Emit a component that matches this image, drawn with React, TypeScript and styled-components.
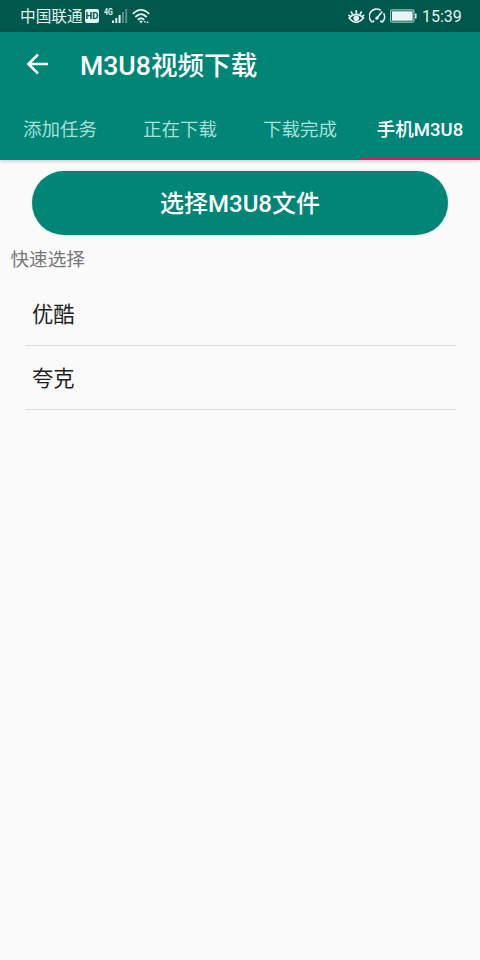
import React from "react";
import styled, { createGlobalStyle } from "styled-components";

const GlobalStyle = createGlobalStyle`
  *, *::before, *::after { box-sizing: border-box; }
  body {
    margin: 0;
    background: #fafafa;
    font-family: Roboto, "Noto Sans CJK SC", sans-serif;
  }
  svg { display: block; flex: none; }
`;

const Screen = styled.div`
  width: 480px;
  height: 960px;
  background: #fafafa;
  overflow: hidden;
`;

const StatusBar = styled.div`
  display: flex;
  justify-content: space-between;
  align-items: center;
  height: 32px;
  padding: 0 18px 0 20px;
  background: #00574b;
  color: #e3f3f0;
`;

const StatusGroup = styled.div`
  display: flex;
  align-items: center;
  height: 32px;
`;

const Carrier = styled.span`
  padding-top: 2px;
  font-size: 15.7px;
  line-height: 32px;
  width: 65px;
  white-space: nowrap;
`;

const HdBadge = styled.span`
  width: 14px;
  height: 14px;
  border-radius: 2px;
  background: #e3f3f0;
  color: #00574b;
  font-size: 9.5px;
  font-weight: 700;
  line-height: 14px;
  text-align: center;
`;

const Network = styled.span`
  align-self: flex-start;
  margin: 6px 0 0 5px;
  width: 8px;
  font-size: 9.5px;
  font-weight: 700;
  line-height: 12px;
  transform: scaleX(0.74);
  transform-origin: left center;
`;

const Clock = styled.span`
  padding-top: 2px;
  margin-left: 5px;
  width: 40px;
  font-size: 16px;
  line-height: 32px;
`;

const Header = styled.header`
  height: 128px;
  background: #008577;
  box-shadow: 0 1px 4px rgba(0, 0, 0, 0.22);
`;

const Toolbar = styled.div`
  display: flex;
  align-items: center;
  height: 64px;
  padding-left: 26px;
  color: #fff;
`;

const Title = styled.h1`
  margin: 0 0 0 32px;
  padding-top: 4px;
  font-size: 26.6px;
  font-weight: 500;
  line-height: 60px;
`;

const Tabs = styled.nav`
  display: grid;
  grid-template-columns: repeat(4, 120px);
  height: 64px;
`;

const Tab = styled.div<{ $active?: boolean }>`
  padding-top: 7px;
  text-align: center;
  white-space: nowrap;
  font-size: 18.5px;
  font-weight: ${(p) => (p.$active ? 500 : 400)};
  line-height: 54px;
  color: ${(p) => (p.$active ? "#fff" : "#a6e0d9")};
  border-bottom: 3px solid ${(p) => (p.$active ? "#d81b60" : "transparent")};
`;

const PickButton = styled.button`
  display: block;
  width: 416px;
  height: 64px;
  margin: 11px 32px 0;
  padding: 2px 0 0;
  border: 0;
  border-radius: 32px;
  background: #008577;
  box-shadow: 0 0 2px rgba(0, 133, 119, 0.25);
  color: #fff;
  font: 500 24px/62px Roboto, "Noto Sans CJK SC", sans-serif;
`;

const SectionLabel = styled.div`
  margin: 9px 0 0 10.5px;
  font-size: 18.6px;
  line-height: 32px;
  color: #777;
`;

const List = styled.ul`
  list-style: none;
  margin: 6px 24px 0 25px;
  padding: 0;
`;

const ListItem = styled.li`
  height: 64px;
  padding: 2px 0 0 7px;
  border-bottom: 1px solid #dcdcdc;
  font-size: 21.3px;
  line-height: 62px;
  color: #1f1f1f;
`;

const SignalIcon = () => (
  <svg width="17" height="16" viewBox="0 0 17 16" fill="#e3f3f0">
    <rect x="0" y="12.5" width="2" height="2.5" />
    <rect x="3.3" y="10" width="2" height="5" />
    <rect x="6.6" y="7" width="2" height="8" />
    <rect x="9.9" y="4" width="2" height="11" opacity=".38" />
    <rect x="13.2" y="1" width="2" height="14" opacity=".38" />
  </svg>
);

const WifiIcon = () => (
  <svg width="18" height="16" viewBox="0 0 18 16" fill="none" stroke="#e3f3f0" strokeWidth="1.8">
    <path d="M.8 5.9Q9-2.2 17.2 5.9" />
    <path d="M3.3 9Q9 3.2 14.7 9" />
    <path d="M5.8 11.8Q9 8.6 12.2 11.8" />
    <path d="M7.2 13.2Q9 11.6 10.8 13.2L9 15.4Z" fill="#e3f3f0" stroke="none" />
    <path d="M11.8 13h2.2l-1.1 1.9zM14.4 15h2.2l-1.1-2z" fill="#e3f3f0" stroke="none" />
  </svg>
);

const EyeIcon = () => (
  <svg width="17" height="16" viewBox="0 0 17 16" fill="none" stroke="#e3f3f0" strokeWidth="1.7">
    <path d="M1.2 10Q8.2 2.6 15.4 10Q8.2 18.4 1.2 10Z" />
    <circle cx="8.3" cy="10.2" r="2.8" fill="#e3f3f0" stroke="none" />
    <path d="M8.3 5.5V2M4.6 6.6L3 3.4M12 6.6l1.6-3.2M2.4 8.6L.5 6.8M14.2 8.6l1.9-1.8" />
  </svg>
);

const GaugeIcon = () => (
  <svg width="17" height="16" viewBox="0 0 17 16" fill="none" stroke="#e3f3f0" strokeWidth="1.6">
    <path d="M3.4 14.3A7.2 7.2 0 0 1 11.6 2.3M14.6 5.2A7.2 7.2 0 0 1 13 14.3" />
    <path d="M3.5 14.2l1.7-1.6M12.9 14.2l-1.6-1.6M8 10L13.2 3.6" />
    <circle cx="7.9" cy="10.2" r="1.6" fill="#e3f3f0" stroke="none" />
  </svg>
);

const BatteryIcon = () => (
  <svg width="27" height="14" viewBox="0 0 27 14">
    <rect x=".6" y=".9" width="23.4" height="12.2" rx="1.5" fill="none" stroke="#9bc9c1" strokeWidth="1.1" />
    <rect x="2" y="2.3" width="20.6" height="9.4" fill="#e9f5f3" />
    <rect x="25" y="4.3" width="1.6" height="5.4" rx=".6" fill="#c7e0dc" />
  </svg>
);

const LeftIcons = styled.div`
  display: flex;
  align-items: center;
  gap: 3px;
`;

const RightIcons = styled.div`
  display: flex;
  align-items: center;
  gap: 4px;
`;

const BackIcon = () => (
  <svg width="22" height="22" viewBox="0 0 22 22" fill="none" stroke="#fff" strokeWidth="2.5">
    <path d="M22 11H2.5M12 1.5L2.4 11L12 20.5" />
  </svg>
);

const tabs = ["添加任务", "正在下载", "下载完成", "手机M3U8"];
const sources = ["优酷", "夸克"];

export default function App() {
  return (
    <Screen>
      <GlobalStyle />
      <StatusBar>
        <StatusGroup>
          <Carrier>中国联通</Carrier>
          <HdBadge>HD</HdBadge>
          <Network>4G</Network>
          <LeftIcons>
            <SignalIcon />
            <WifiIcon />
          </LeftIcons>
        </StatusGroup>
        <StatusGroup>
          <RightIcons>
            <EyeIcon />
            <GaugeIcon />
            <BatteryIcon />
          </RightIcons>
          <Clock>15:39</Clock>
        </StatusGroup>
      </StatusBar>
      <Header>
        <Toolbar>
          <BackIcon />
          <Title>M3U8视频下载</Title>
        </Toolbar>
        <Tabs>
          {tabs.map((label, i) => (
            <Tab key={label} $active={i === 3}>
              {label}
            </Tab>
          ))}
        </Tabs>
      </Header>
      <main>
        <PickButton>选择M3U8文件</PickButton>
        <SectionLabel>快速选择</SectionLabel>
        <List>
          {sources.map((name) => (
            <ListItem key={name}>{name}</ListItem>
          ))}
        </List>
      </main>
    </Screen>
  );
}
